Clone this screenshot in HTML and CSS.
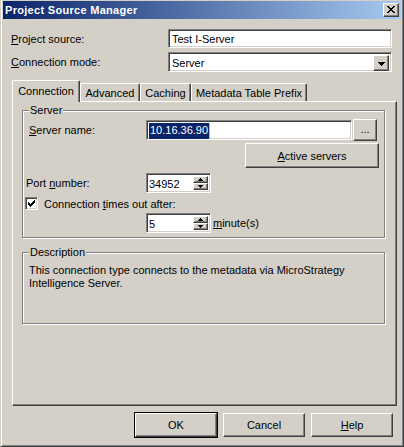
FILE: index.html
```html
<!DOCTYPE html>
<html lang="en">
<head>
    <meta charset="UTF-8">
    <title>Project Source Manager</title>
    <link rel="stylesheet" href="styles.css">
</head>
<body>

<div class="window">

    <!-- Title bar -->
    <div class="titlebar">
        <span class="title">Project Source Manager</span>
        <span class="btn close">
            <svg width="8" height="7" viewBox="0 0 8 7" shape-rendering="crispEdges"><path d="M0 0h2v1h-2zM6 0h2v1h-2zM1 1h2v1h-2zM5 1h2v1h-2zM2 2h4v1h-4zM3 3h2v1h-2zM2 4h4v1h-4zM1 5h2v1h-2zM5 5h2v1h-2zM0 6h2v1h-2zM6 6h2v1h-2z" fill="#000"/></svg>
        </span>
    </div>

    <!-- Top fields -->
    <div class="form">
        <div class="field">
            <span class="field-label"><u>P</u>roject source:</span>
            <div class="sunken text-box">Test I-Server</div>
        </div>
        <div class="field">
            <span class="field-label"><u>C</u>onnection mode:</span>
            <div class="sunken combo">
                <span class="combo-value">Server</span>
                <span class="btn combo-btn">
                    <svg width="7" height="4" viewBox="0 0 7 4" shape-rendering="crispEdges"><path d="M0 0h7v1h-7zM1 1h5v1h-5zM2 2h3v1h-3zM3 3h1v1h-1z" fill="#000"/></svg>
                </span>
            </div>
        </div>
    </div>

    <!-- Tabs -->
    <div class="tabs">
        <span class="tab active">Connection</span>
        <span class="tab">Advanced</span>
        <span class="tab">Caching</span>
        <span class="tab">Metadata Table Prefix</span>
    </div>

    <div class="panel">

        <div class="group server-group">
            <span class="group-label">Server</span>

            <div class="row server-row">
                <span class="row-label"><u>S</u>erver name:</span>
                <div class="sunken server-box"><span class="selected">10.16.36.90</span><span class="caret"></span></div>
                <span class="btn browse">...</span>
            </div>

            <div class="row active-row">
                <span class="btn active-btn"><u>A</u>ctive servers</span>
            </div>

            <div class="row port-row">
                <span class="row-label port-label">Port <u>n</u>umber:</span>
                <div class="sunken spin">
                    <span class="spin-value">34952</span>
                    <span class="spin-btns">
                        <span class="btn spin-btn"><svg width="5" height="3" viewBox="0 0 5 3" shape-rendering="crispEdges"><path d="M2 0h1v1h-1zM1 1h3v1h-3zM0 2h5v1h-5z" fill="#000"/></svg></span>
                        <span class="btn spin-btn"><svg width="5" height="3" viewBox="0 0 5 3" shape-rendering="crispEdges"><path d="M0 0h5v1h-5zM1 1h3v1h-3zM2 2h1v1h-1z" fill="#000"/></svg></span>
                    </span>
                </div>
            </div>

            <div class="row check-row">
                <span class="sunken checkbox">
                    <svg width="7" height="7" viewBox="0 0 7 7" shape-rendering="crispEdges"><path d="M6 0h1v1h-1zM5 1h2v1h-2zM0 2h1v1h-1zM4 2h3v1h-3zM0 3h2v1h-2zM3 3h3v1h-3zM0 4h5v1h-5zM1 5h3v1h-3zM2 6h1v1h-1z" fill="#000"/></svg>
                </span>
                <span class="check-label">Connection <u>t</u>imes out after:</span>
            </div>

            <div class="row minute-row">
                <div class="sunken spin">
                    <span class="spin-value">5</span>
                    <span class="spin-btns">
                        <span class="btn spin-btn"><svg width="5" height="3" viewBox="0 0 5 3" shape-rendering="crispEdges"><path d="M2 0h1v1h-1zM1 1h3v1h-3zM0 2h5v1h-5z" fill="#000"/></svg></span>
                        <span class="btn spin-btn"><svg width="5" height="3" viewBox="0 0 5 3" shape-rendering="crispEdges"><path d="M0 0h5v1h-5zM1 1h3v1h-3zM2 2h1v1h-1z" fill="#000"/></svg></span>
                    </span>
                </div>
                <span class="unit"><u>m</u>inute(s)</span>
            </div>
        </div>

        <div class="group desc-group">
            <span class="group-label">Description</span>
            <p class="desc-text">This connection type connects to the metadata via MicroStrategy<br>Intelligence Server.</p>
        </div>

    </div>

    <!-- Dialog buttons -->
    <div class="buttons">
        <span class="btn push default">OK</span>
        <span class="btn push">Cancel</span>
        <span class="btn push"><u>H</u>elp</span>
    </div>

</div>

</body>
</html>
```

FILE: styles.css
```css
* { box-sizing: border-box; }

body {
    margin: 0;
    background: #d4d0c8;
    font-family: "Liberation Sans", Arial, sans-serif;
    font-size: 11px;
    color: #000;
}

u { text-decoration: underline; text-underline-offset: 1px; }

/* Window frame */
.window {
    width: 404px;
    height: 447px;
    padding: 1px 2px 0 2px;
    border-left: 1px solid #d4d0c8;
    border-right: 1px solid #404040;
    border-bottom: 1px solid #404040;
    box-shadow: inset 1px 0 #fff, inset -1px -1px #808080;
    display: flex;
    flex-direction: column;
}

.titlebar {
    height: 18px;
    padding: 0 2px;
    background: linear-gradient(to right, #0a246a, #a6caf0);
    display: flex;
    align-items: center;
    justify-content: space-between;
}

.title {
    color: #fff;
    font-weight: bold;
    font-size: 11px;
    letter-spacing: 0.3px;
}

/* Classic 3D bits */
.btn {
    background: #d4d0c8;
    border: 1px solid;
    border-color: #fff #404040 #404040 #fff;
    box-shadow: inset -1px -1px #808080;
    display: flex;
    align-items: center;
    justify-content: center;
}

.sunken {
    background: #fff;
    border: 1px solid;
    border-color: #808080 #fff #fff #808080;
    box-shadow: inset 1px 1px #404040, inset -1px -1px #d4d0c8;
}

.close {
    width: 16px;
    height: 14px;
    padding-bottom: 1px;
}

/* Top fields */
.form {
    margin: 10px 0 0 8px;
    display: flex;
    flex-direction: column;
    gap: 4px;
}

.field {
    display: flex;
    align-items: center;
}

.field-label { width: 157px; }

.text-box {
    width: 224px;
    height: 19px;
    padding: 2px 3px;
    line-height: 15px;
}

.combo {
    width: 224px;
    height: 20px;
    padding: 2px;
    display: flex;
}

.combo-value {
    flex: 1;
    padding-left: 1px;
    line-height: 16px;
}

.combo-btn {
    width: 16px;
    height: 16px;
    padding-top: 1px;
}

/* Tabs */
.tabs {
    margin: 8px 0 0 9px;
    height: 21px;
    display: flex;
    align-items: flex-end;
    position: relative;
    z-index: 1;
}

.tab {
    height: 18px;
    border-top: 1px solid #fff;
    border-left: 1px solid #fff;
    border-right: 1px solid #404040;
    box-shadow: inset -1px 0 #808080;
    border-radius: 2px 2px 0 0;
    text-align: center;
    padding-top: 2px;
    line-height: 14px;
}

.tab:nth-child(1) { width: 68px; }
.tab:nth-child(2) { width: 60px; }
.tab:nth-child(3) { width: 51px; }
.tab:nth-child(4) { width: 116px; }

.tab.active {
    height: 22px;
    margin-bottom: -1px;
    background: #d4d0c8;
    padding-top: 3px;
}

.panel {
    margin-left: 9px;
    width: 385px;
    height: 305px;
    border: 1px solid;
    border-color: #fff #404040 #404040 #fff;
    box-shadow: inset -1px -1px #808080;
    padding: 8px 0 0 9px;
}

/* Group boxes */
.group {
    position: relative;
    width: 363px;
    border: 1px solid #808080;
    box-shadow: inset 1px 1px #fff, 1px 1px #fff;
}

.group-label {
    position: absolute;
    top: -7px;
    left: 6px;
    padding: 0 1px;
    line-height: 13px;
    background: #d4d0c8;
}

.server-group { height: 128px; }

.desc-group {
    height: 72px;
    margin-top: 14px;
}

.row {
    display: flex;
    align-items: center;
}

.server-row {
    height: 22px;
    margin-top: 8px;
}

.row-label {
    width: 123px;
    padding-left: 6px;
}

.server-box {
    width: 206px;
    height: 20px;
    padding: 2px 0 0 2px;
    line-height: 14px;
    display: flex;
}

.selected {
    background: #0a246a;
    color: #fff;
    padding: 0 1px;
}

.caret {
    width: 1px;
    background: #e8b84a;
}

.browse {
    width: 24px;
    height: 22px;
    margin-left: 1px;
    padding-bottom: 2px;
}

.active-row { margin-top: 2px; }

.active-btn {
    width: 134px;
    height: 25px;
    margin-left: 222px;
}

.port-row {
    margin-top: 5px;
    height: 20px;
}

.port-label { padding-left: 3px; }

.spin {
    width: 65px;
    height: 20px;
    padding: 2px;
    display: flex;
}

.spin-value {
    flex: 1;
    line-height: 16px;
}

.spin-btns {
    width: 15px;
    display: flex;
    flex-direction: column;
}

.spin-btn {
    height: 8px;
}

.check-row {
    margin-top: 4px;
    height: 13px;
}

.checkbox {
    width: 13px;
    height: 13px;
    margin-left: 2px;
    display: flex;
    align-items: center;
    justify-content: center;
}

.check-label { margin-left: 6px; }

.minute-row {
    margin-top: 2px;
    height: 21px;
}

.minute-row .spin { margin-left: 123px; }

.unit { margin-left: 2px; }

.desc-text {
    margin: 11px 0 0 0;
    padding: 0 6px;
    line-height: 13px;
}

/* Dialog buttons */
.buttons {
    margin-top: 7px;
    padding-right: 8px;
    display: flex;
    justify-content: flex-end;
    gap: 6px;
}

.push {
    width: 82px;
    height: 24px;
}

.push.default {
    outline: 1px solid #000;
    outline-offset: 0;
    border-color: #fff #404040 #404040 #fff;
}
```
